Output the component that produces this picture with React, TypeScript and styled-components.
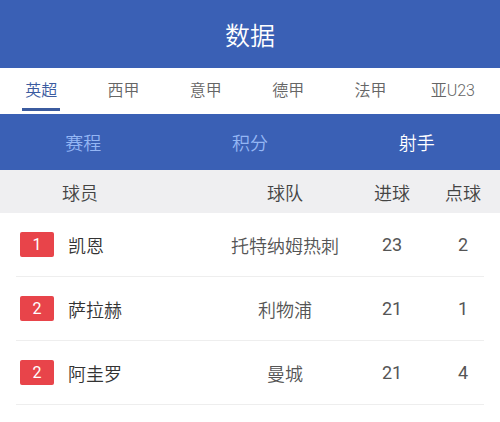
import React, { FC } from "react";
import styled, { createGlobalStyle } from "styled-components";

const BLUE = "#3a60b5";

const GlobalStyle = createGlobalStyle`
  html, body {
    margin: 0;
    padding: 0;
    background: #fff;
  }
  body {
    font-family: Roboto, "Noto Sans CJK SC", sans-serif;
    font-weight: 350;
  }
`;

const leagues = ["英超", "西甲", "意甲", "德甲", "法甲", "亚U23"];
const subTabs = ["赛程", "积分", "射手"];

interface Scorer {
  rank: number;
  name: string;
  team: string;
  goals: number;
  penalties: number;
}

const scorers: Scorer[] = [
  { rank: 1, name: "凯恩", team: "托特纳姆热刺", goals: 23, penalties: 2 },
  { rank: 2, name: "萨拉赫", team: "利物浦", goals: 21, penalties: 1 },
  { rank: 2, name: "阿圭罗", team: "曼城", goals: 21, penalties: 4 },
];

const App: FC = () => {
  return (
    <Page>
      <GlobalStyle />
      <Header>数据</Header>
      <LeagueTabs>
        {leagues.map((l, i) => (
          <LeagueTab key={l} $active={i === 0}>
            <span>{l}</span>
            <Underline $active={i === 0} />
          </LeagueTab>
        ))}
      </LeagueTabs>
      <SubTabs>
        {subTabs.map((t, i) => (
          <SubTab key={t} $active={i === 2}>
            {t}
          </SubTab>
        ))}
      </SubTabs>
      <TableHead>
        <HeadPlayer>球员</HeadPlayer>
        <Cell>球队</Cell>
        <Cell>进球</Cell>
        <LastCell>点球</LastCell>
      </TableHead>
      <List>
        {scorers.map((s) => (
          <Row key={s.name}>
            <Player>
              <Rank>{s.rank}</Rank>
              <Name>{s.name}</Name>
            </Player>
            <Team>{s.team}</Team>
            <Num>{s.goals}</Num>
            <LastNum>{s.penalties}</LastNum>
          </Row>
        ))}
      </List>
    </Page>
  );
};

export default App;

//---------------------------------styled component-----------------------------------
const Page = styled.div`
  width: 500px;
  height: 422px;
  overflow: hidden;
  background: #fff;
`;

const Header = styled.div`
  height: 68px;
  background: ${BLUE};
  color: #fff;
  font-size: 25px;
  display: flex;
  align-items: center;
  justify-content: center;
  padding-bottom: 1px;
  box-sizing: border-box;
`;

const LeagueTabs = styled.div`
  display: flex;
  height: 46px;
  padding-right: 6px;
  background: #fff;
`;

const LeagueTab = styled.div<{ $active: boolean }>`
  flex: 1;
  display: flex;
  flex-direction: column;
  align-items: center;
  padding-top: 12px;
  font-size: 16px;
  line-height: 22px;
  color: ${(p) => (p.$active ? "#3b5b9f" : "#666")};
`;

const Underline = styled.div<{ $active: boolean }>`
  width: 38px;
  height: 3px;
  margin-top: 6px;
  background: ${(p) => (p.$active ? "#3b5b9f" : "transparent")};
`;

const SubTabs = styled.div`
  display: flex;
  height: 56px;
  background: ${BLUE};
`;

const SubTab = styled.div<{ $active: boolean }>`
  flex: 1;
  display: flex;
  align-items: center;
  justify-content: center;
  font-size: 18px;
  color: ${(p) => (p.$active ? "#fff" : "#94b6f4")};
`;

const Grid = styled.div`
  display: grid;
  grid-template-columns: 194px 150px 64px 1fr;
  align-items: center;
`;

const TableHead = styled(Grid)`
  height: 43px;
  padding: 0 16px;
  background: #efeff1;
  font-size: 18px;
  color: #444;
`;

const Cell = styled.div`
  text-align: center;
`;

const LastCell = styled(Cell)`
  padding-left: 18px;
`;

const HeadPlayer = styled.div`
  padding-left: 46px;
`;

const List = styled.div`
  padding: 0 16px;
`;

const Row = styled(Grid)`
  height: 63px;
  border-bottom: 1px solid #eeeeee;
  font-size: 18px;
  color: #333;
`;

const Player = styled.div`
  display: flex;
  align-items: center;
`;

const Rank = styled.div`
  width: 34px;
  height: 25px;
  margin-left: 4px;
  border-radius: 2px;
  background: #e8444a;
  color: #fff;
  font-size: 16px;
  font-weight: 400;
  display: flex;
  align-items: center;
  justify-content: center;
`;

const Name = styled.div`
  margin-left: 14px;
  color: #333;
`;

const Team = styled(Cell)`
  color: #555;
`;

const Num = styled(Cell)`
  color: #555;
  font-weight: 400;
`;

const LastNum = styled(LastCell)`
  color: #555;
  font-weight: 400;
`;
